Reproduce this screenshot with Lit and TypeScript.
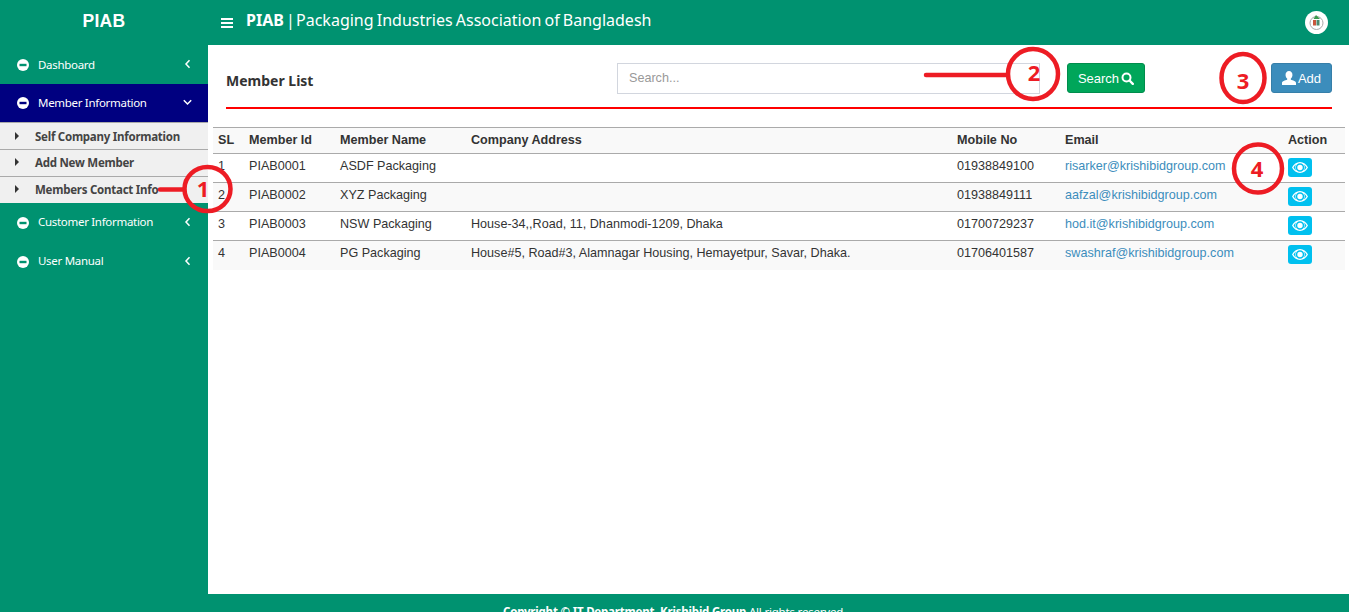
import { LitElement, html, css, svg } from "lit";
import { customElement } from "lit/decorators.js";

const members = [
  { sl: 1, id: "PIAB0001", name: "ASDF Packaging", address: "", mobile: "01938849100", email: "risarker@krishibidgroup.com" },
  { sl: 2, id: "PIAB0002", name: "XYZ Packaging", address: "", mobile: "01938849111", email: "aafzal@krishibidgroup.com" },
  { sl: 3, id: "PIAB0003", name: "NSW Packaging", address: "House-34,,Road, 11, Dhanmodi-1209, Dhaka", mobile: "01700729237", email: "hod.it@krishibidgroup.com" },
  { sl: 4, id: "PIAB0004", name: "PG Packaging", address: "House#5, Road#3, Alamnagar Housing, Hemayetpur, Savar, Dhaka.", mobile: "01706401587", email: "swashraf@krishibidgroup.com" },
];

const minusIcon = html`<svg class="dot" viewBox="0 0 12 12"><circle cx="6" cy="6" r="6" fill="#fff"/><rect x="2.5" y="4.8" width="7" height="2.4" fill="currentColor"/></svg>`;
const leftIcon = html`<svg class="chev" viewBox="0 0 9 10"><path d="M6.500 1.200 3 5l3.500 3.800" fill="none" stroke="#fff" stroke-width="1.500"/></svg>`;
const downIcon = html`<svg class="chev" viewBox="0 0 9 10"><path d="M.8 3.200 4.500 7l3.700-3.800" fill="none" stroke="#fff" stroke-width="1.500"/></svg>`;
const eyeIcon = html`<svg width="16" height="11" viewBox="0 0 16 11"><path fill="#fff" fill-rule="evenodd" d="M8 0c3.400 0 6.300 2.200 8 5.500C14.300 8.800 11.400 11 8 11S1.700 8.800 0 5.500C1.700 2.200 4.600 0 8 0Zm0 1.200a4.300 4.300 0 1 0 0 8.600 4.300 4.300 0 0 0 0-8.600ZM1.500 5.500c.7 1.200 1.600 2.200 2.700 2.900a5 5 0 0 1 0-5.800C3.100 3.300 2.200 4.300 1.500 5.500Zm10.300-2.900a5 5 0 0 1 0 5.800c1.100-.7 2-1.700 2.700-2.900-.7-1.200-1.600-2.200-2.700-2.900ZM8 2.800a2.700 2.700 0 1 1 0 5.400 2.700 2.700 0 0 1 0-5.400Z"/></svg>`;

// red callouts drawn over the page
const marks = svg`
  <g fill="none" stroke="#ed1c24" stroke-width="4.500">
    <ellipse cx="207.500" cy="189" rx="23" ry="22"/>
    <ellipse cx="1033" cy="74" rx="25" ry="25"/>
    <ellipse cx="1243" cy="78" rx="21.500" ry="24"/>
    <ellipse cx="1258" cy="168.500" rx="24" ry="24"/>
    <path d="M160 189.500h24M926 75h81" stroke-linecap="round"/>
  </g>
  <g class="num" fill="#ed1c24" text-anchor="middle">
    <text x="203" y="197">1</text>
    <text x="1034" y="81">2</text>
    <text x="1243" y="89">3</text>
    <text x="1257" y="177">4</text>
  </g>
`;

@customElement("app-root")
export class AppRoot extends LitElement {
  static styles = css`
    :host {
      display: block;
      position: relative;
      height: 612px;
      overflow: hidden;
      font-family: "Liberation Sans", Arial, sans-serif;
      font-size: 14px;
      color: #333;
      background: #fff;
    }
    .top {
      display: flex;
      align-items: center;
      height: 45px;
      background: #009270;
      color: #fff;
    }
    .brand {
      width: 208px;
      text-align: center;
      font-weight: 700;
      font-size: 17.500px;
      letter-spacing: 0.3px;
      padding-bottom: 3px;
    }
    .burger {
      width: 12px;
      height: 10px;
      margin: 0 13px;
      border-top: 2px solid #fff;
      border-bottom: 2px solid #fff;
      position: relative;
      box-sizing: border-box;
    }
    .burger::after {
      content: "";
      position: absolute;
      left: 0;
      right: 0;
      top: 2px;
      height: 2px;
      background: #fff;
    }
    .title {
      flex: 1;
      font-family: "Noto Sans", sans-serif;
      font-size: 16px;
      word-spacing: -1px;
      padding-bottom: 5px;
    }
    .title b {
      font-weight: 700;
    }
    .title span {
      margin: 0 -2px 0 -1px;
    }
    .avatar {
      width: 23px;
      height: 23px;
      margin-right: 21px;
      border-radius: 50%;
      background: #fff;
      display: flex;
      align-items: center;
      justify-content: center;
    }
    .layout {
      display: flex;
      height: 549px;
    }
    .side {
      width: 208px;
      flex: none;
      background: #009270;
      font-family: "Noto Sans", sans-serif;
      font-size: 11.500px;
      letter-spacing: -0.3px;
      color: #fff;
    }
    .item {
      display: flex;
      align-items: center;
      height: 39px;
      padding: 0 16px 0 17px;
      color: #009270;
    }
    .item.open {
      height: 38px;
      background: #000080;
      color: #000080;
    }
    .item span {
      flex: 1;
      margin: -2px 0 0 9px;
      color: #fff;
    }
    .item:first-child span {
      margin-top: 0;
    }
    .dot {
      width: 12px;
      height: 12px;
    }
    .chev {
      width: 9px;
      height: 10px;
      margin-top: -2px;
    }
    .sub {
      background: #f0f0f0;
      border-top: 1px solid #aaa;
      letter-spacing: -0.25px;
    }
    .sub div {
      display: flex;
      align-items: center;
      height: 26px;
      padding-left: 15px;
      font-weight: 700;
      color: #444;
      border-bottom: 1px solid #aaa;
    }
    .sub div + div {
      height: 24px;
      padding-bottom: 2px;
    }
    .sub div:last-child {
      border-bottom: 0;
    }
    .sub i {
      width: 0;
      height: 0;
      margin-right: 16px;
      border-left: 4px solid #333;
      border-top: 4px solid transparent;
      border-bottom: 4px solid transparent;
    }
    .main {
      flex: 1;
      padding: 18px 4px 0 5px;
      min-width: 0;
    }
    .bar {
      display: flex;
      align-items: flex-start;
      box-sizing: border-box;
      height: 46px;
      margin: 0 13px;
      border-bottom: 2px solid #f00;
    }
    .bar h1 {
      width: 391px;
      margin: 8px 0 0;
      font-family: "Noto Sans", sans-serif;
      font-size: 14px;
      font-weight: 700;
      color: #333;
    }
    .search {
      width: 423px;
      height: 31px;
      margin-right: 27px;
      padding: 0 11px 2px;
      box-sizing: border-box;
      border: 1px solid #d2d6de;
      font: 12.600px "Liberation Sans", Arial, sans-serif;
      color: #333;
      outline: none;
    }
    .search::placeholder {
      color: #999;
    }
    .btn {
      display: flex;
      align-items: center;
      justify-content: center;
      gap: 2px;
      height: 30px;
      border: 1px solid transparent;
      border-radius: 3px;
      color: #fff;
      font: 13px "Liberation Sans", Arial, sans-serif;
      box-sizing: border-box;
    }
    .btn.find {
      width: 78px;
      background: #00a65a;
      border-color: #008d4c;
    }
    .btn.add {
      width: 61px;
      margin-left: auto;
      background: #3c8dbc;
      border-color: #367fa9;
    }
    table {
      width: 1132px;
      margin-top: 18px;
      table-layout: fixed;
      border-collapse: collapse;
    }
    th,
    td {
      padding: 0 5px;
      text-align: left;
      font-size: 12.600px;
      border-top: 1px solid #aaa;
      white-space: nowrap;
      color: #333;
    }
    th {
      height: 26px;
      padding-bottom: 1px;
      box-sizing: border-box;
      background: #f9f9f9;
      font-weight: 700;
    }
    td {
      vertical-align: top;
      padding-top: 5px;
      box-sizing: border-box;
      height: 29px;
    }
    tr:nth-child(even) td {
      background: #f9f9f9;
    }
    td a {
      color: #3c8dbc;
      text-decoration: none;
    }
    .view {
      display: flex;
      align-items: center;
      justify-content: center;
      width: 24px;
      height: 19px;
      margin-top: -1px;
      background: #00c0ef;
      border-radius: 3px;
    }
    .foot {
      height: 18px;
      background: #009270;
      color: #fff;
      font-family: "Noto Sans", sans-serif;
      font-size: 11.500px;
      letter-spacing: -0.2px;
      text-align: center;
      padding-top: 10px;
      box-sizing: border-box;
      overflow: hidden;
    }
    .marks {
      position: absolute;
      left: 0;
      top: 0;
      width: 1349px;
      height: 612px;
      pointer-events: none;
    }
    .num {
      font-family: "Open Sans", sans-serif;
      font-size: 22px;
      font-weight: 700;
    }
  `;

  render() {
    return html`
      <div class="top">
        <div class="brand">PIAB</div>
        <div class="burger"></div>
        <div class="title"><b>PIAB</b> <span>|</span> Packaging Industries Association of Bangladesh</div>
        <div class="avatar">
          <svg width="17" height="17" viewBox="0 0 17 17">
            <circle cx="8.500" cy="9" r="6.500" fill="none" stroke="#aaa" stroke-width="1"/>
            <path d="M5.500 5 8 1l2 2 2 2z" fill="#3a9a4e"/>
            <rect x="5" y="6" width="3" height="5.500" fill="#c9563c"/>
            <rect x="8.500" y="6" width="3" height="5.500" fill="#4c8a6e"/>
          </svg>
        </div>
      </div>
      <div class="layout">
        <nav class="side">
          <div class="item">${minusIcon}<span>Dashboard</span>${leftIcon}</div>
          <div class="item open">${minusIcon}<span>Member Information</span>${downIcon}</div>
          <div class="sub">
            <div><i></i>Self Company Information</div>
            <div><i></i>Add New Member</div>
            <div><i></i>Members Contact Info</div>
          </div>
          <div class="item">${minusIcon}<span>Customer Information</span>${leftIcon}</div>
          <div class="item">${minusIcon}<span>User Manual</span>${leftIcon}</div>
        </nav>
        <main class="main">
          <div class="bar">
            <h1>Member List</h1>
            <input class="search" placeholder="Search..." />
            <div class="btn find">
              Search
              <svg width="13" height="13" viewBox="0 0 13 13"><circle cx="5.500" cy="5.500" r="4" fill="none" stroke="#fff" stroke-width="2"/><path d="m8.500 8.500 3.300 3.300" stroke="#fff" stroke-width="2.400" stroke-linecap="round"/></svg>
            </div>
            <div class="btn add">
              <svg width="14" height="14" viewBox="0 0 13 13"><path fill="#fff" d="M6.500 0c2 0 3.200 1.600 3.200 3.600 0 1.400-.6 2.700-1.500 3.400v1.200c1.900.6 4.800 1.300 4.800 3V13H0v-1.800c0-1.700 2.900-2.400 4.800-3V7C3.900 6.300 3.300 5 3.300 3.600 3.300 1.600 4.500 0 6.500 0Z"/></svg>
              Add
            </div>
          </div>
          <table>
            <colgroup>
              <col style="width:31px" /><col style="width:91px" /><col style="width:131px" /><col style="width:486px" /><col style="width:108px" /><col style="width:223px" /><col style="width:62px" />
            </colgroup>
            <thead>
              <tr><th>SL</th><th>Member Id</th><th>Member Name</th><th>Company Address</th><th>Mobile No</th><th>Email</th><th>Action</th></tr>
            </thead>
            <tbody>
              ${members.map(
                (m) => html`<tr>
                  <td>${m.sl}</td>
                  <td>${m.id}</td>
                  <td>${m.name}</td>
                  <td>${m.address}</td>
                  <td>${m.mobile}</td>
                  <td><a href="#">${m.email}</a></td>
                  <td><div class="view">${eyeIcon}</div></td>
                </tr>`
              )}
            </tbody>
          </table>
        </main>
      </div>
      <footer class="foot"><b>Copyright © IT Department, Krishibid Group</b> All rights reserved.</footer>
      <svg class="marks" viewBox="0 0 1349 612">${marks}</svg>
    `;
  }
}
